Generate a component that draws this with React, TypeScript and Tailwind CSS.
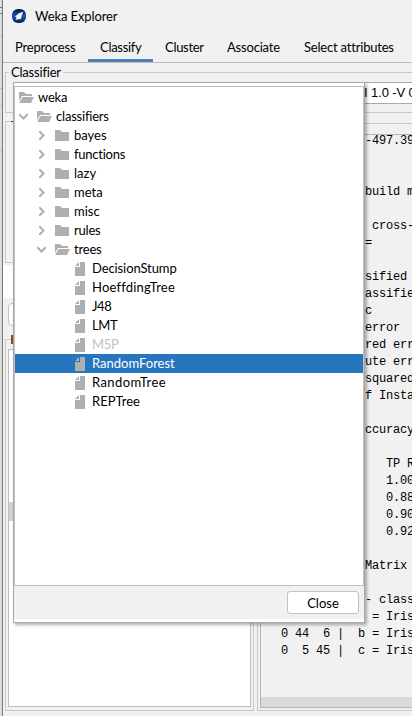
import React from "react";

const ui = "font-['Lato','Noto_Sans_CJK_TC',sans-serif]";

type Line = { text: string; inset?: string };

const output: Line[] = [
  { text: "-497.395" },
  { text: "" },
  { text: "" },
  { text: "build model" },
  { text: "" },
  { text: "cross-validation", inset: "pl-[105px]" },
  { text: "=" },
  { text: "" },
  { text: "sified Instances" },
  { text: "assified Instances" },
  { text: "c" },
  { text: "error" },
  { text: "red error" },
  { text: "ute error" },
  { text: "squared error" },
  { text: "f Instances" },
  { text: "" },
  { text: "ccuracy" },
  { text: "" },
  { text: "TP Rate", inset: "pl-[119px]" },
  { text: "1.000", inset: "pl-[119px]" },
  { text: "0.880", inset: "pl-[119px]" },
  { text: "0.900", inset: "pl-[119px]" },
  { text: "0.927", inset: "pl-[119px]" },
  { text: "" },
  { text: "Matrix ===" },
  { text: "" },
  { text: "- classified" },
  { text: "= Iris-setosa", inset: "pl-[105px]" },
  { text: "0 44  6 |  b = Iris-versicolor", inset: "pl-[14px]" },
  { text: "0  5 45 |  c = Iris-virginica", inset: "pl-[14px]" },
];

type Kind = "open" | "closed" | "leaf";
type Row = { label: string; kind: Kind; depth: number; state?: "off" | "on"; spacing?: string };

const rows: Row[] = [
  { label: "weka", kind: "open", depth: 0, spacing: "tracking-[-0.2px]" },
  { label: "classifiers", kind: "open", depth: 1, spacing: "tracking-[-0.2px]" },
  { label: "bayes", kind: "closed", depth: 2 },
  { label: "functions", kind: "closed", depth: 2, spacing: "tracking-[-0.25px]" },
  { label: "lazy", kind: "closed", depth: 2 },
  { label: "meta", kind: "closed", depth: 2 },
  { label: "misc", kind: "closed", depth: 2 },
  { label: "rules", kind: "closed", depth: 2, spacing: "tracking-[-0.2px]" },
  { label: "trees", kind: "open", depth: 2, spacing: "tracking-[-0.2px]" },
  { label: "DecisionStump", kind: "leaf", depth: 3, spacing: "tracking-[-0.1px]" },
  { label: "HoeffdingTree", kind: "leaf", depth: 3, spacing: "tracking-[0.2px]" },
  { label: "J48", kind: "leaf", depth: 3, spacing: "tracking-[-0.4px]" },
  { label: "LMT", kind: "leaf", depth: 3, spacing: "tracking-[-0.4px]" },
  { label: "M5P", kind: "leaf", depth: 3, state: "off", spacing: "tracking-[-0.3px]" },
  { label: "RandomForest", kind: "leaf", depth: 3, state: "on" },
  { label: "RandomTree", kind: "leaf", depth: 3, spacing: "tracking-[0.4px]" },
  { label: "REPTree", kind: "leaf", depth: 3 },
];

const indents = ["pl-0", "pl-0", "pl-[18px]", "pl-9"];

function NodeIcon({ kind }: { kind: Kind }) {
  if (kind === "leaf")
    return (
      <svg width="16" height="16" viewBox="0 0 16 16" fill="#afafaf" className="shrink-0">
        <path d="M8 1h5v14H3V6h5z" />
        <path d="M7 1v4H3z" />
      </svg>
    );
  if (kind === "closed")
    return (
      <svg width="16" height="16" viewBox="0 0 16 16" fill="#afafaf" className="shrink-0">
        <path d="M1 2h5l2 2h7v9H1z" />
      </svg>
    );
  return (
    <svg width="16" height="16" viewBox="0 0 16 16" fill="#afafaf" className="shrink-0">
      <path d="M1 2h5l2 2h6v2H4L1 11z" />
      <path d="M4.4 7H16l-3 6H1.2z" />
    </svg>
  );
}

function Chevron({ kind }: { kind: Kind }) {
  return (
    <svg width="11" height="11" viewBox="0 0 11 11" fill="none" stroke="#afafaf" strokeWidth="2" className="shrink-0">
      {kind === "closed" && <path d="M3.3 1.3 7.5 5.5 3.3 9.7" />}
      {kind === "open" && <path d="M1.3 3.3 5.5 7.5 9.7 3.3" />}
    </svg>
  );
}

function TreeRow({ row }: { row: Row }) {
  const tone =
    row.state === "on" ? "bg-[#2675bf] text-white" : row.state === "off" ? "text-[#c3c3c3]" : "text-black";
  return (
    <div className={`flex h-[19px] items-center pl-[3px] ${tone}`}>
      <div className={`flex items-center ${indents[row.depth]}`}>
        {row.depth > 0 && (
          <span className="mr-[7px] flex">
            <Chevron kind={row.kind} />
          </span>
        )}
        <NodeIcon kind={row.kind} />
        <span className={`ml-1 whitespace-nowrap text-[13px] leading-[19px] ${row.spacing ?? ""}`}>{row.label}</span>
      </div>
    </div>
  );
}

function Logo() {
  return (
    <svg width="16" height="16" viewBox="0 0 16 16">
      <defs>
        <linearGradient id="sky" x1="0" y1="0" x2="0" y2="1">
          <stop offset="0" stopColor="#07124f" />
          <stop offset="0.5" stopColor="#2450ae" />
          <stop offset="1" stopColor="#0b1f62" />
        </linearGradient>
      </defs>
      <rect x="1" y="1" width="14" height="14" rx="6" fill="url(#sky)" />
      <path d="M12.2 3.8 8 5.2 4 8.6l1.6 1L4.6 12l3.2-1L9.8 11.2l.8-3z" fill="#f4f8ff" />
    </svg>
  );
}

export default function App() {
  return (
    <div className={`relative flex h-[716px] w-[412px] overflow-hidden bg-[#f1f1f1] text-[13px] text-black ${ui}`}>
      <div className="flex w-[3px] shrink-0 flex-col border-r border-[#777] bg-[#dcdcdc]">
        <div className="h-[7px]" />
        <div className="h-[7px] border-y border-[#6d7688]" />
        <div className="h-[21px]" />
        <div className="h-[54px] border-y border-[#c0c0c0]" />
        <div className="h-[17px] border-b border-[#c0c0c0]" />
        <div className="h-[45px] border-b border-[#c0c0c0]" />
      </div>

      <div className="flex w-[409px] shrink-0 flex-col">
        <header className="flex h-[31px] items-center gap-2 pl-2 pt-px">
          <Logo />
          <span className="leading-[19px] tracking-[-0.1px]">Weka Explorer</span>
        </header>
        <nav className="flex h-8 w-[409px] shrink-0 overflow-hidden whitespace-nowrap border-b border-[#bdbdbd] leading-[32px]">
          <span className="w-[85px] pl-3 tracking-[-0.2px]">Preprocess</span>
          <span className="w-[65px] border-b-[3px] border-[#4a80b5] pl-3 tracking-[-0.3px]">Classify</span>
          <span className="w-[62px] pl-3 tracking-[-0.3px]">Cluster</span>
          <span className="w-[77px] pl-3 tracking-[-0.2px]">Associate</span>
          <span className="pl-3 tracking-[-0.2px]">Select attributes</span>
        </nav>

        <fieldset className="ml-0.5 h-[50px] border-y border-l border-[#c8c8c8]">
          <legend className="ml-[3px] h-[18px] px-0.5 leading-[18px] tracking-[-0.2px]">Classifier</legend>
          <div className="ml-[7px] mt-[1px] flex h-[22px] items-center overflow-hidden whitespace-nowrap border border-r-0 border-[#a9a9a9] bg-white pl-[350px] font-['Liberation_Sans',sans-serif] text-[13px] tracking-[-0.1px]">
            I 1.0 -V 0.001
          </div>
        </fieldset>

        <div className="flex h-[598px]">
          <div className="flex w-[252px] flex-col">
            <fieldset className="ml-0.5 h-[150px] w-[249px] border border-[#c8c8c8]">
              <legend className="ml-[5px] flex h-4 w-4 items-center">
                <span className="h-px w-2 bg-[#444]" />
              </legend>
            </fieldset>
            <div className="mt-[2px] h-[33px] bg-white" />
            <div className="ml-[5px] mt-[5px] h-[23px] w-[242px] rounded border border-[#c2c2c2] bg-white" />
            <fieldset className="ml-0.5 mt-1 flex h-[381px] w-[249px] flex-col border border-[#c8c8c8]">
              <legend className="ml-[5px] flex h-[18px] w-5 items-center">
                <span className="h-[9px] w-2 bg-[#8a4b10]" />
              </legend>
              <div className="ml-0.5 mt-[1px] h-[358px] w-[243px] border border-[#bdbdbd] bg-white">
                <div className="mt-[152px] h-[19px] bg-[#d2d2d2]" />
              </div>
            </fieldset>
          </div>
          <div className="ml-[3px] mt-[10px] h-[588px] w-[160px] overflow-hidden border border-r-0 border-[#c8c8c8] pl-0.5 pt-[10px]">
            <div className="flex h-[574px] flex-col border border-r-0 border-[#b5b5b5]">
              <div className="-mt-0.5 h-[564px] overflow-hidden pl-[6px] font-['Liberation_Mono',monospace] text-[12px] leading-[17px] tracking-[-0.2px]">
                {output.map((line, i) => (
                  <div key={i} className={`h-[17px] whitespace-pre ${line.inset ?? "pl-[98px]"}`}>
                    {line.text}
                  </div>
                ))}
              </div>
              <div className="h-[10px] bg-[#dadada]" />
            </div>
          </div>
        </div>
      </div>

      <div className="absolute left-[13px] top-[82px] flex h-[541px] w-[352px] flex-col border border-[#a8a8a8] bg-white shadow-[2px_2px_3px_rgba(0,0,0,0.3)]">
        <div className="mt-[3px] h-[500px] border border-[#c0c0c0] bg-white pt-[1px]">
          {rows.map((row) => (
            <TreeRow key={row.label} row={row} />
          ))}
        </div>
        <div className="flex h-[33px] items-center justify-end bg-[#f1f1f1] pr-[5px]">
          <button className="h-[23px] w-[72px] rounded-[3px] border border-[#c2c2c2] bg-white text-center leading-[20px]">
            Close
          </button>
        </div>
      </div>
    </div>
  );
}
